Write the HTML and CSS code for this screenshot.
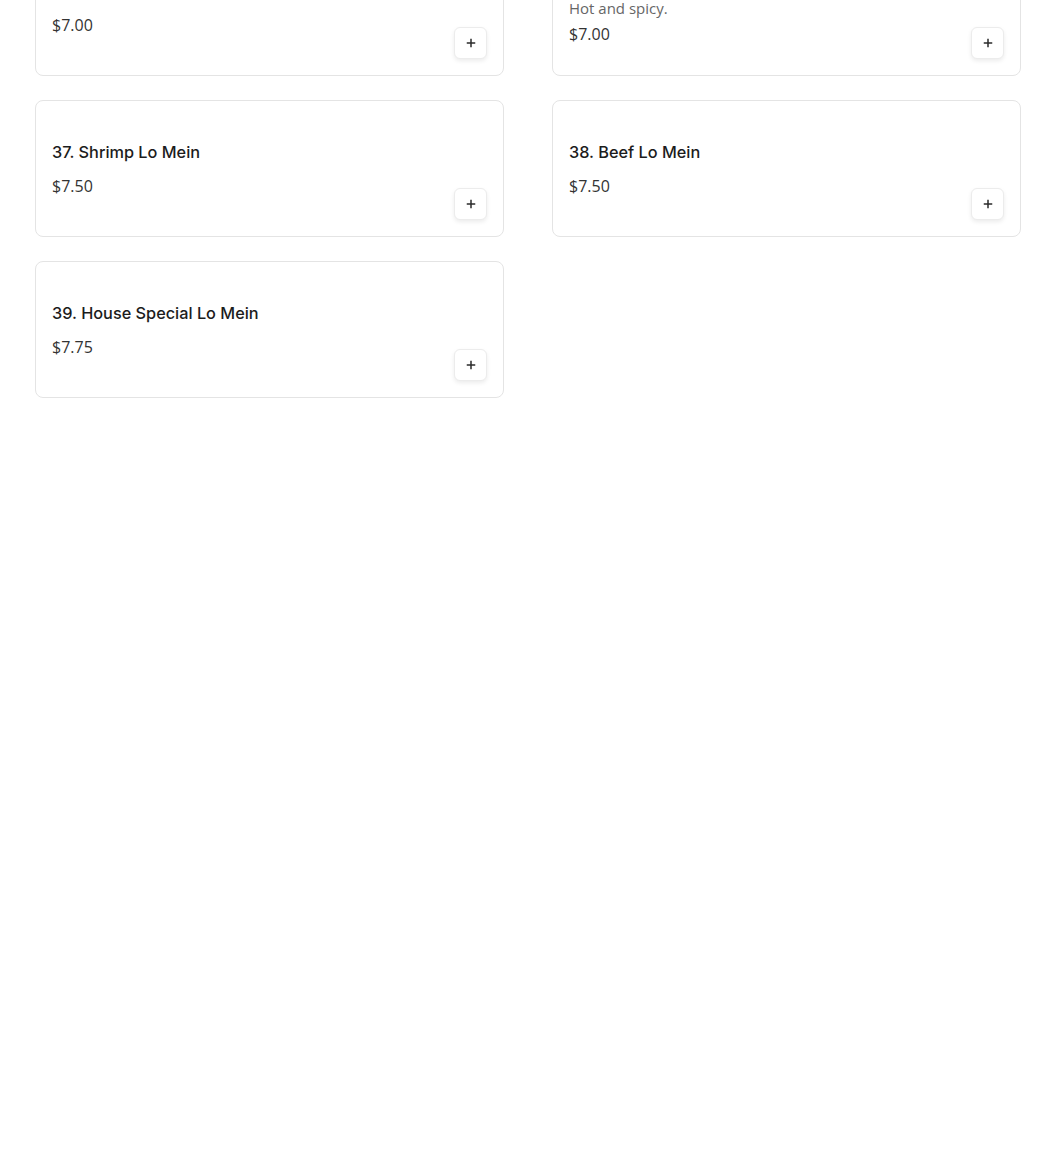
FILE: index.html
```html
<!DOCTYPE html>
<html lang="en">
<head>
<meta charset="utf-8">
<title>Menu</title>
<link rel="stylesheet" href="styles.css">
</head>
<body>
<main class="menu">
  <div class="grid">
    <article class="card">
      <div class="info">
        <h3 class="title">35. Chicken Lo Mein</h3>
        <p class="price">$7.00</p>
      </div>
      <div class="actions"><button class="add" aria-label="Add"><svg viewBox="0 0 12 12" width="12" height="12"><path d="M6 1.75v8.5M1.75 6h8.5" stroke="#2b2b2b" stroke-width="1.5" fill="none"/></svg></button></div>
    </article>
    <article class="card">
      <div class="info">
        <h3 class="title">36. Szechuan Lo Mein</h3>
        <p class="desc">Hot and spicy.</p>
        <p class="price">$7.00</p>
      </div>
      <div class="actions"><button class="add" aria-label="Add"><svg viewBox="0 0 12 12" width="12" height="12"><path d="M6 1.75v8.5M1.75 6h8.5" stroke="#2b2b2b" stroke-width="1.5" fill="none"/></svg></button></div>
    </article>
    <article class="card">
      <div class="info">
        <h3 class="title">37. Shrimp Lo Mein</h3>
        <p class="price">$7.50</p>
      </div>
      <div class="actions"><button class="add" aria-label="Add"><svg viewBox="0 0 12 12" width="12" height="12"><path d="M6 1.75v8.5M1.75 6h8.5" stroke="#2b2b2b" stroke-width="1.5" fill="none"/></svg></button></div>
    </article>
    <article class="card">
      <div class="info">
        <h3 class="title">38. Beef Lo Mein</h3>
        <p class="price">$7.50</p>
      </div>
      <div class="actions"><button class="add" aria-label="Add"><svg viewBox="0 0 12 12" width="12" height="12"><path d="M6 1.75v8.5M1.75 6h8.5" stroke="#2b2b2b" stroke-width="1.5" fill="none"/></svg></button></div>
    </article>
    <article class="card">
      <div class="info">
        <h3 class="title">39. House Special Lo Mein</h3>
        <p class="price">$7.75</p>
      </div>
      <div class="actions"><button class="add" aria-label="Add"><svg viewBox="0 0 12 12" width="12" height="12"><path d="M6 1.75v8.5M1.75 6h8.5" stroke="#2b2b2b" stroke-width="1.5" fill="none"/></svg></button></div>
    </article>
  </div>
</main>
</body>
</html>
```
FILE: styles.css
```css
* { box-sizing: border-box; }
html, body { margin: 0; padding: 0; background: #fff; }
body {
  font-family: "Open Sans", "Noto Sans", "DejaVu Sans", sans-serif;
  color: #222;
}
.menu {
  margin-top: -61px;
  padding-left: 35px;
}
.grid {
  display: grid;
  grid-template-columns: 469px 469px;
  column-gap: 48px;
  row-gap: 24px;
}
.card {
  display: flex;
  min-height: 137px;
  padding: 16px;
  border: 1px solid #e4e4e4;
  border-radius: 8px;
  background: #fff;
}
.info {
  flex: 1;
  display: flex;
  flex-direction: column;
  justify-content: center;
}
.title {
  margin: 0 0 10px;
  font-family: Inter, "Open Sans", sans-serif;
  font-size: 16.3px;
  font-weight: 500;
  line-height: 24px;
  color: #1c1c1c;
}
.title:has(+ .desc) { margin-bottom: 5px; }
.desc {
  margin: 0 0 4px;
  font-size: 15px;
  line-height: 20px;
  color: #666;
}
.price {
  margin: 0;
  font-size: 16px;
  line-height: 24px;
  color: #333;
}
.actions {
  display: flex;
  align-items: flex-end;
}
.add {
  width: 33px;
  height: 32px;
  padding: 0;
  display: flex;
  align-items: center;
  justify-content: center;
  background: #fff;
  border: 1px solid #ececec;
  border-radius: 6px;
  box-shadow: 0 2px 4px rgba(0,0,0,0.08);
  cursor: pointer;
}
.add svg { display: block; }
```
